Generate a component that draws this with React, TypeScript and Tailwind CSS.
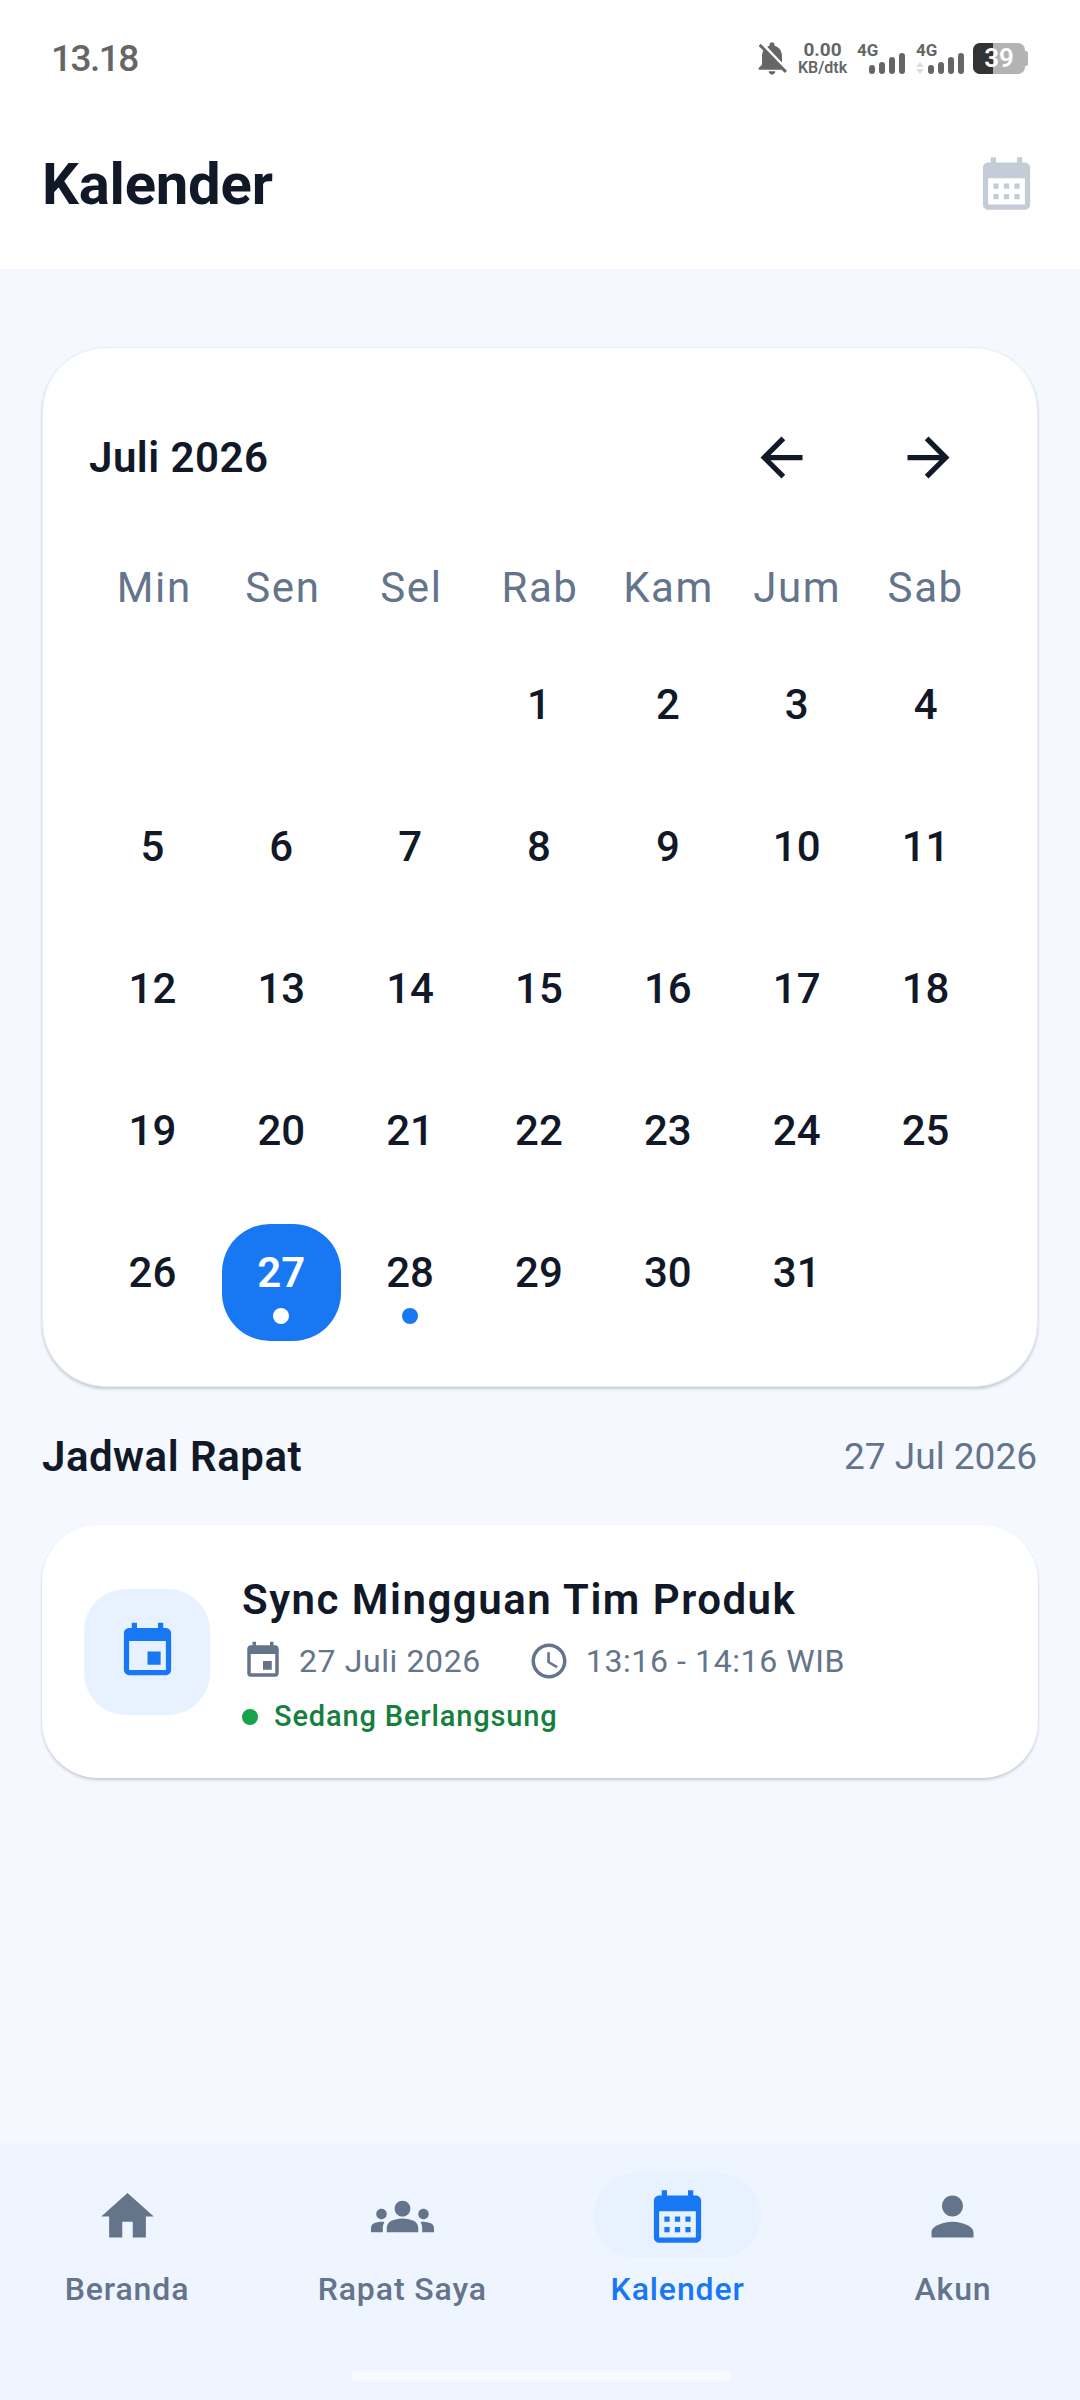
import { MdAccessTime, MdArrowBack, MdArrowForward, MdCalendarMonth, MdEvent, MdGroups, MdHome, MdNotificationsOff, MdPerson } from 'react-icons/md'

const dayNames = ['Min', 'Sen', 'Sel', 'Rab', 'Kam', 'Jum', 'Sab']
const days: (number | null)[] = [null, null, null, ...Array.from({ length: 31 }, (_, i) => i + 1)]

function Signal({ arrows }: { arrows?: boolean }) {
  return (
    <div className="relative flex h-[31px] w-[48px] items-end justify-end gap-[4px]">
      <span className="absolute left-0 top-0 text-[17px] font-bold leading-[14px] text-[#666666]">4G</span>
      {arrows && (
        <svg viewBox="0 0 8 12" className="absolute bottom-0 left-0 h-[12px] w-[8px]" fill="#dddddd">
          <path d="M4 0l4 5H0zM4 12L0 7h8z" />
        </svg>
      )}
      <span className="h-[9px] w-[6px] rounded-full bg-[#666666]" />
      <span className="h-[12px] w-[6px] rounded-full bg-[#666666]" />
      <span className="h-[17px] w-[6px] rounded-full bg-[#666666]" />
      <span className="h-[21px] w-[6px] rounded-full bg-[#666666]" />
    </div>
  )
}

function StatusBar() {
  return (
    <div className="flex h-[102px] items-center justify-between pl-[51px] pr-[52px] pt-[14px]">
      <span className="text-[37px] font-medium leading-none tracking-[-1.5px] text-[#666666]">13.18</span>
      <div className="flex items-center">
        <MdNotificationsOff className="text-[40px] text-[#666666]" />
        <div className="ml-[3px] flex w-[55px] flex-col items-center whitespace-nowrap text-[#666666]">
          <span className="text-[19px] font-bold leading-[19px]">0.00</span>
          <span className="text-[16px] font-semibold leading-[18px]">KB/dtk</span>
        </div>
        <div className="ml-[7px]">
          <Signal />
        </div>
        <div className="ml-[11px]">
          <Signal arrows />
        </div>
        <div className="relative ml-[9px] flex h-[31px] w-[52px] items-center justify-center overflow-hidden rounded-[7px] bg-[#b3b3b3]">
          <span className="absolute inset-y-0 left-0 w-[20px] bg-[#333333]" />
          <span className="relative text-[26px] font-semibold leading-none text-white">39</span>
        </div>
        <span className="h-[15px] w-[3px] rounded-r-[2px] bg-[#b3b3b3]" />
      </div>
    </div>
  )
}

function NavItem({ icon, label, active }: { icon: React.ReactNode; label: string; active?: boolean }) {
  return (
    <div className="flex w-[200px] flex-col items-center">
      <div className={`flex h-[85px] w-[167px] items-center justify-center rounded-[42px] pt-[2px] ${active ? 'bg-[#e8f1ff] text-[#1877f2]' : 'text-[#64748b]'}`}>
        {icon}
      </div>
      <span className={`mt-[11px] whitespace-nowrap text-[32px] font-medium leading-[40px] tracking-[0.9px] ${active ? 'text-[#1877f2]' : 'text-[#64748b]'}`}>{label}</span>
    </div>
  )
}

export default function App() {
  return (
    <div className="flex h-[2400px] w-[1080px] flex-col bg-[#f5f8ff] font-['Roboto',sans-serif]">
      <div className="bg-white">
        <StatusBar />
        <div className="flex h-[167px] items-start justify-between pl-[42px] pr-[42px] pt-[48px]">
          <h1 className="text-[58px] font-bold leading-[68px] tracking-[-0.2px] text-[#111827]">Kalender</h1>
          <MdCalendarMonth className="mt-[2px] text-[63px] text-[#c4ccd8]" />
        </div>
      </div>

      <div className="flex-1 px-[42px] pt-[78px]">
        <div className="rounded-[64px] border border-[#e8edf5] bg-white pb-[45px] pl-[45px] pr-[47px] pt-[73px] shadow-[0_2px_3px_rgba(15,23,42,0.2)]">
          <div className="flex h-[72px] items-center justify-between pl-[1px]">
            <span className="text-[42px] font-semibold tracking-[0.5px] text-[#111827]">Juli 2026</span>
            <div className="flex gap-[84px] pr-[30px]">
              <MdArrowBack className="text-[63px] text-[#111827]" />
              <MdArrowForward className="text-[63px] text-[#111827]" />
            </div>
          </div>
          <div className="mt-[71px] grid grid-cols-7 pl-[2px]">
            {dayNames.map((d) => (
              <span key={d} className="text-center text-[42px] leading-[48px] tracking-[1.6px] text-[#64748b]">{d}</span>
            ))}
          </div>
          <div className="mt-[44px] grid grid-cols-7 gap-y-[25px]">
            {days.map((d, i) => (
              <div
                key={i}
                className={`mx-auto flex h-[117px] w-[119px] flex-col items-center rounded-[48px] pt-[25px] ${d === 27 ? 'bg-[#1877f2] text-white' : 'text-[#111827]'}`}
              >
                <span className={`text-[42px] leading-[48px] ${d === 27 ? 'font-semibold' : 'font-medium'}`}>{d}</span>
                {d === 27 && <span className="mt-[11px] h-[16px] w-[16px] rounded-full bg-white" />}
                {d === 28 && <span className="mt-[11px] h-[16px] w-[16px] rounded-full bg-[#1877f2]" />}
              </div>
            ))}
          </div>
        </div>

        <div className="mt-[38px] flex items-center justify-between pr-[1px]">
          <span className="text-[42px] font-semibold tracking-[0.5px] text-[#111827]">Jadwal Rapat</span>
          <span className="text-[37px] text-[#64748b]">27 Jul 2026</span>
        </div>

        <div className="mt-[37px] flex h-[253px] items-center rounded-[56px] bg-white pl-[42px] shadow-[0_2px_3px_rgba(15,23,42,0.2)]">
          <div className="flex h-[126px] w-[126px] items-center justify-center rounded-[42px] bg-[#e8f1ff]">
            <MdEvent className="text-[63px] text-[#1877f2]" />
          </div>
          <div className="ml-[32px] flex flex-col pt-[10px]">
            <span className="text-[42px] font-semibold leading-[52px] tracking-[1.5px] text-[#111827]">Sync Mingguan Tim Produk</span>
            <div className="mt-[11px] flex items-center text-[#64748b]">
              <MdEvent className="text-[42px]" />
              <span className="ml-[15px] text-[32px] tracking-[0.6px]">27 Juli 2026</span>
              <MdAccessTime className="ml-[47px] text-[42px]" />
              <span className="ml-[16px] text-[32px] tracking-[0.6px]">13:16 - 14:16 WIB</span>
            </div>
            <div className="mt-[10px] flex items-center">
              <span className="h-[16px] w-[16px] rounded-full bg-[#16a34a]" />
              <span className="ml-[16px] text-[29px] font-medium tracking-[0.85px] text-[#15803d]">Sedang Berlangsung</span>
            </div>
          </div>
        </div>
      </div>

      <div className="relative h-[257px] bg-[#eef5ff] pt-[30px]">
        <div className="flex justify-between px-[27px]">
          <NavItem icon={<MdHome className="text-[63px]" />} label="Beranda" />
          <NavItem icon={<MdGroups className="text-[63px]" />} label="Rapat Saya" />
          <NavItem icon={<MdCalendarMonth className="text-[63px]" />} label="Kalender" active />
          <NavItem icon={<MdPerson className="text-[63px]" />} label="Akun" />
        </div>
        <div className="absolute bottom-[19px] left-[352px] h-[10px] w-[378px] rounded-[3px] bg-[#f7faff]" />
      </div>
    </div>
  )
}
